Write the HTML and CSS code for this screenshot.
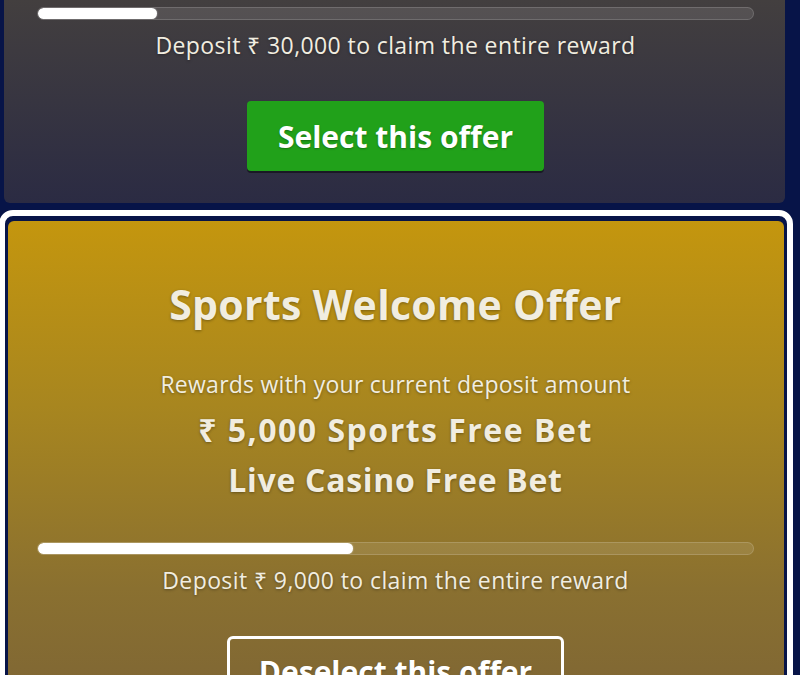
FILE: index.html
```html
<!DOCTYPE html>
<html lang="en">
<head>
<meta charset="utf-8">
<title>Welcome Offers</title>
<link rel="stylesheet" href="styles.css">
</head>
<body>
<main class="offer-list">
  <section class="offer offer--casino">
    <div class="offer__body offer__body--top">
      <div class="progress"><div class="progress__fill" style="width:16.7%"></div></div>
      <p class="offer__hint">Deposit ₹ 30,000 to claim the entire reward</p>
      <button class="btn btn--select" type="button">Select this offer</button>
    </div>
  </section>

  <section class="offer-selected">
    <div class="offer offer--sports">
      <div class="offer__body">
        <h2 class="offer__title">Sports Welcome Offer</h2>
        <p class="offer__sub">Rewards with your current deposit amount</p>
        <p class="offer__reward offer__reward--amount">₹ 5,000 Sports Free Bet</p>
        <p class="offer__reward">Live Casino Free Bet</p>
        <div class="progress progress--gold"><div class="progress__fill" style="width:44%"></div></div>
        <p class="offer__hint">Deposit ₹ 9,000 to claim the entire reward</p>
        <button class="btn btn--deselect" type="button">Deselect this offer</button>
      </div>
    </div>
  </section>
</main>
</body>
</html>
```
FILE: styles.css
```css
* { box-sizing: border-box; }
html, body { margin: 0; padding: 0; }
body {
  background: #071448;
  font-family: "Open Sans", "Noto Sans", "DejaVu Sans", sans-serif;
  color: #f1ede0;
  width: 800px;
  height: 675px;
  overflow: hidden;
}
.offer-list {
  display: flex;
  flex-direction: column;
  padding: 0 15px 0 4px;
}
.offer {
  border-radius: 6px;
  text-align: center;
}
.offer--casino {
  border-radius: 0 0 6px 6px;
  background: linear-gradient(180deg, #433f3f 0%, #2b2b43 100%);
}
.offer__body {
  display: flex;
  flex-direction: column;
  align-items: center;
  padding: 57px 30px 40px 29px;
}
.offer__body--top {
  padding: 7px 31px 32px 33px;
}
.offer-selected {
  margin: 7px -8px 0 -5px;
  border: 6px solid #ffffff;
  border-radius: 14px;
  padding: 5px 3px 3px 3px;
  background: #071448;
}
.offer--sports {
  background: linear-gradient(180deg, #c4960e 0%, #a8861f 35%, #8a7030 70%, #7a6236 100%);
  min-height: 480px;
}
.offer__title,
.offer__sub,
.offer__reward,
.offer__hint { margin: 0; text-shadow: 0 1px 3px rgba(0,0,0,0.35); }
.offer__title {
  font-size: 41px;
  line-height: 52px;
  font-weight: 700;
  letter-spacing: 0.3px;
}
.offer__sub {
  margin-top: 40px;
  font-size: 23px;
  line-height: 28px;
  letter-spacing: 0.25px;
}
.offer__reward {
  font-size: 32px;
  line-height: 50px;
  font-weight: 700;
  letter-spacing: 0.7px;
}
.offer__reward--amount { letter-spacing: 1.5px; }
.offer__sub + .offer__reward { margin-top: 7px; }
.progress {
  align-self: stretch;
  height: 13px;
  border-radius: 7px;
  background: rgba(255,255,255,0.1);
  border: 1px solid rgba(255,255,255,0.16);
  overflow: hidden;
}
.progress--gold { margin-top: 37px; }
.progress__fill {
  height: 100%;
  background: #ffffff;
  border-radius: 7px;
  box-shadow: 0 0 2px rgba(255,255,255,0.6);
}
.offer__hint {
  margin-top: 11px;
  font-size: 23px;
  line-height: 28px;
  letter-spacing: 0.4px;
}
.btn {
  margin-top: 42px;
  font-family: inherit;
  font-size: 30px;
  font-weight: 700;
  color: #ffffff;
  height: 70px;
  padding: 0 31px;
  border-radius: 4px;
  cursor: pointer;
  text-shadow: 0 1px 2px rgba(0,0,0,0.3);
}
.btn--select {
  background: #21a11a;
  border: none;
  box-shadow: 0 2px 0 rgba(0,0,0,0.45);
}
.btn--deselect {
  background: transparent;
  border: 3px solid #ffffff;
  border-radius: 6px;
  padding: 0 29px;
}
```
